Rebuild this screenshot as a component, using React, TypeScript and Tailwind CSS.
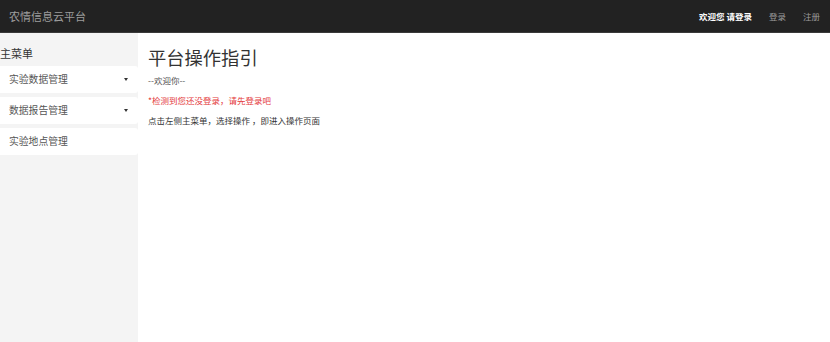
const font = { fontFamily: '"Noto Sans CJK SC", "Liberation Sans", sans-serif' };

const menu = [
  { label: '实验数据管理', caret: true },
  { label: '数据报告管理', caret: true },
  { label: '实验地点管理', caret: false },
];

export default function App() {
  return (
    <div className="flex h-[342px] w-[830px] flex-col bg-white" style={font}>
      <header className="flex h-[33px] shrink-0 items-center border-b border-[#3a3a3a] bg-[#222222] pl-[9px] pr-[10px]">
        <span className="text-[11px] leading-none text-[#9d9d9d]">农情信息云平台</span>
        <div className="ml-auto flex items-center text-[8.5px] leading-none">
          <span className="font-bold text-white">欢迎您 请登录</span>
          <span className="ml-[17px] text-[#9d9d9d]">登录</span>
          <span className="ml-[17px] text-[#9d9d9d]">注册</span>
        </div>
      </header>
      <div className="flex flex-1">
        <aside className="w-[138px] shrink-0 bg-[#f4f4f4]">
          <p className="mt-[14px] text-[11px] leading-[13px] text-[#333]">主菜单</p>
          <div className="mt-[6px] space-y-[4px]">
            {menu.map((m) => (
              <div
                key={m.label}
                className="flex h-[27px] items-center rounded-r-[3px] bg-white pl-[9px] pr-[10px]"
              >
                <span className="text-[9.8px] leading-none text-[#555]">{m.label}</span>
                {m.caret && (
                  <span className="ml-auto h-0 w-0 border-x-[2.5px] border-t-[3px] border-x-transparent border-t-[#333]" />
                )}
              </div>
            ))}
          </div>
        </aside>
        <main className="flex-1 pl-[10px]">
          <h1 className="mt-[13px] text-[18.3px] leading-[22px] text-[#333]">平台操作指引</h1>
          <p className="mt-[7px] text-[8.5px] leading-[10px] text-[#555]">--欢迎你--</p>
          <p className="mt-[10px] text-[8.5px] leading-[10px] text-[#e4393c]">*检测到您还没登录，请先登录吧</p>
          <p className="mt-[10px] text-[8.5px] leading-[10px] text-[#333]">点击左侧主菜单，选择操作 ，即进入操作页面</p>
        </main>
      </div>
    </div>
  );
}
